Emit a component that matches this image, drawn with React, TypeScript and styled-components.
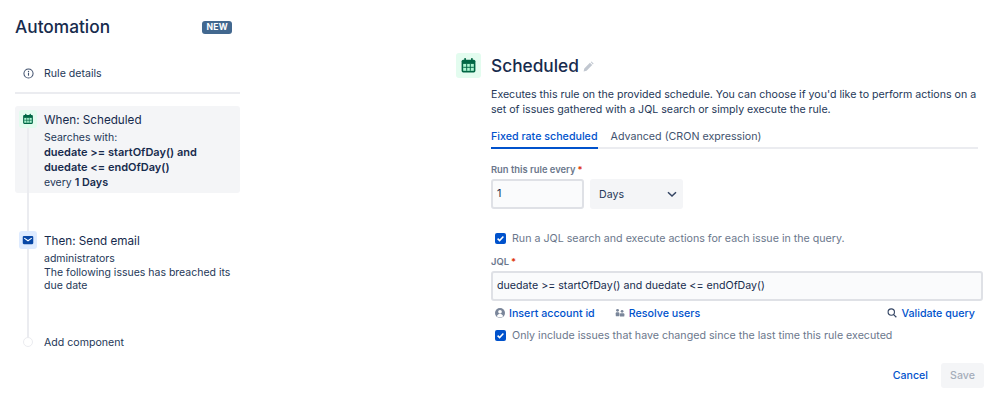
import { FC } from 'react'
import styled, { createGlobalStyle } from 'styled-components'

const GlobalStyle = createGlobalStyle`
  html, body {
    margin: 0;
    padding: 0;
    background: #fff;
    font-family: Inter, 'Liberation Sans', sans-serif;
    color: #172b4d;
  }
`

const Page = styled.div`
  display: flex;
  width: 999px;
  height: 405px;
  overflow: hidden;
  box-sizing: border-box;
  padding: 0 15px;
`

const Sidebar = styled.aside`
  width: 225px;
  flex: none;
  padding-top: 15px;
  position: relative;
`

const SideHead = styled.div`
  display: flex;
  align-items: center;
  justify-content: space-between;
  height: 24px;
  padding-right: 8px;
`

const AppTitle = styled.h1`
  margin: 0;
  font-size: 17.3px;
  font-weight: 500;
  line-height: 24px;
`

const NewBadge = styled.span`
  background: #42688f;
  color: #fff;
  border-radius: 3px;
  font-size: 8.6px;
  font-weight: 700;
  line-height: 13px;
  padding: 0 4px;
  letter-spacing: 0.3px;
`

const DetailsRow = styled.div`
  display: flex;
  align-items: center;
  gap: 10px;
  height: 42px;
  margin-top: 13px;
  padding: 2px 0 0 8px;
  border-bottom: 2px solid #ebecf0;
  box-sizing: border-box;
  font-size: 10.6px;
  color: #253858;
`

const Steps = styled.div`
  position: relative;
  margin-top: 12px;
`

const Rail = styled.div`
  position: absolute;
  z-index: 1;
  left: 12px;
  top: 22px;
  width: 2px;
  height: 210px;
  background: #ebecf0;
`

const Step = styled.div<{ $active?: boolean; $height: number; $top?: number }>`
  position: relative;
  display: flex;
  gap: 6px;
  height: ${p => p.$height}px;
  margin-top: ${p => p.$top ?? 0}px;
  box-sizing: border-box;
  padding: 4px 4px 0;
  border-radius: 3px;
  background: ${p => (p.$active ? '#f4f5f7' : 'transparent')};
`

const StepIcon = styled.div<{ $bg: string }>`
  position: relative;
  z-index: 2;
  width: 18px;
  height: 18px;
  flex: none;
  display: flex;
  align-items: center;
  justify-content: center;
  border-radius: 3px;
  background: ${p => p.$bg};
`

const StepBody = styled.div`
  font-size: 10.5px;
  line-height: 13.5px;
  color: #253858;
  padding-left: 1px;
  white-space: nowrap;
`

const StepTitle = styled.div`
  font-size: 11.7px;
  line-height: 19px;
  color: #172b4d;
  margin: 1px 0;
`

const Jql = styled.div`
  font-size: 11px;
  font-weight: 600;
  line-height: 15.5px;
  color: #172b4d;
`

const Strong = styled.b`
  font-size: 10.8px;
  font-weight: 600;
  color: #172b4d;
`

const AddRow = styled.div`
  position: relative;
  z-index: 2;
  display: flex;
  align-items: center;
  gap: 11px;
  padding-left: 8px;
  height: 20px;
  font-size: 10.6px;
  color: #253858;
`

const AddDot = styled.span`
  width: 10px;
  height: 10px;
  box-sizing: border-box;
  flex: none;
  border-radius: 50%;
  border: 1.5px solid #ebecf0;
  background: #fff;
`

const Main = styled.main`
  margin-left: 216px;
  width: 528px;
  flex: none;
  padding-top: 53px;
`

const MainHead = styled.div`
  display: flex;
  align-items: center;
  height: 25px;
  gap: 10px;
`

const HeadIcon = styled.div`
  width: 25px;
  height: 25px;
  flex: none;
  display: flex;
  align-items: center;
  justify-content: center;
  border-radius: 3px;
  background: #e3fcef;
`

const MainTitle = styled.h2`
  margin: 0;
  font-size: 17.3px;
  font-weight: 500;
  line-height: 25px;
`

const Content = styled.div`
  padding-left: 35px;
`

const Description = styled.p`
  margin: 9px 0 0;
  font-size: 10.62px;
  line-height: 15px;
  color: #253858;
  white-space: nowrap;
`

const Tabs = styled.div`
  display: flex;
  gap: 13px;
  margin-top: 7px;
  width: 487px;
  height: 23px;
  border-bottom: 2px solid #ebecf0;
`

const Tab = styled.div<{ $active?: boolean }>`
  font-size: 10.7px;
  line-height: 26px;
  height: 23px;
  font-weight: ${p => (p.$active ? 500 : 400)};
  color: ${p => (p.$active ? '#0052cc' : '#42526e')};
  border-bottom: 2px solid ${p => (p.$active ? '#0052cc' : 'transparent')};
`

const FieldLabel = styled.div<{ $top: number }>`
  display: flex;
  gap: 2px;
  margin-top: ${p => p.$top}px;
  font-size: 9.4px;
  font-weight: 600;
  line-height: 13px;
  color: #6b778c;
`

const Required = styled.span`
  color: #de350b;
`

const RateRow = styled.div`
  display: flex;
  gap: 6px;
  margin-top: 3px;
`

const NumberBox = styled.div`
  width: 93px;
  height: 30px;
  box-sizing: border-box;
  border: 2px solid #dfe1e6;
  border-radius: 3px;
  background: #fafbfc;
  font-size: 10.8px;
  line-height: 26px;
  padding-left: 4px;
`

const SelectBox = styled.div`
  width: 93px;
  height: 30px;
  box-sizing: border-box;
  border-radius: 3px;
  background: #f4f5f7;
  font-size: 10.6px;
  color: #253858;
  display: flex;
  align-items: center;
  justify-content: space-between;
  padding: 0 4px 0 9px;
`

const CheckRow = styled.div<{ $top: number }>`
  display: flex;
  align-items: center;
  gap: 6px;
  margin-top: ${p => p.$top}px;
  height: 14px;
  padding-left: 4px;
  font-size: 10.67px;
  color: #6b778c;
`

const CheckBox = styled.span`
  width: 11px;
  height: 11px;
  flex: none;
  display: flex;
  align-items: center;
  justify-content: center;
  border-radius: 2px;
  background: #0052cc;
`

const QueryBox = styled.div`
  width: 492px;
  height: 30px;
  margin-top: 3px;
  box-sizing: border-box;
  border: 2px solid #dfe1e6;
  border-radius: 3px;
  background: #fafbfc;
  font-size: 10.67px;
  line-height: 26px;
  padding-left: 4px;
  color: #172b4d;
`

const LinkRow = styled.div`
  display: flex;
  align-items: center;
  width: 484px;
  height: 14px;
  margin-top: 5px;
  padding-left: 4px;
  box-sizing: border-box;
`

const LinkItem = styled.span<{ $push?: boolean }>`
  display: flex;
  align-items: center;
  gap: 4px;
  margin-left: ${p => (p.$push ? 'auto' : '0')};
  margin-right: ${p => (p.$push ? '0' : '20px')};
  font-size: 10.7px;
  font-weight: 500;
  color: #0052cc;
`

const Actions = styled.div`
  display: flex;
  justify-content: flex-end;
  align-items: center;
  gap: 13px;
  width: 493px;
  margin-top: 21px;
`

const TextButton = styled.span`
  font-size: 10.6px;
  font-weight: 500;
  color: #0052cc;
`

const SaveButton = styled.span`
  width: 43px;
  height: 25px;
  border-radius: 3px;
  background: #f4f5f7;
  color: #a5adba;
  font-size: 10.6px;
  font-weight: 500;
  display: flex;
  align-items: center;
  justify-content: center;
`

const CalendarIcon: FC<{ size: number }> = ({ size }) => (
  <svg width={size} height={size} viewBox="0 0 16 16">
    <rect x="1.5" y="2.5" width="13" height="12" rx="1.5" fill="#006644" />
    <rect x="4" y="1" width="1.6" height="3" rx="0.6" fill="#006644" />
    <rect x="10.4" y="1" width="1.6" height="3" rx="0.6" fill="#006644" />
    <rect x="3" y="6.5" width="10" height="6.5" fill="#abf5d1" />
    <path d="M6.3 6.5v6.5M9.7 6.5v6.5M3 9.7h10" stroke="#006644" strokeWidth="0.9" />
  </svg>
)

const MailIcon: FC = () => (
  <svg width="12" height="12" viewBox="0 0 16 16">
    <rect x="1" y="2.5" width="14" height="11" rx="1.5" fill="#0747a6" />
    <path d="M3 5.5l5 3.6 5-3.6" fill="none" stroke="#fff" strokeWidth="1.5" />
  </svg>
)

const InfoIcon: FC = () => (
  <svg width="11" height="11" viewBox="0 0 12 12">
    <circle cx="6" cy="6" r="5" fill="none" stroke="#42526e" strokeWidth="1.1" />
    <rect x="5.4" y="5.2" width="1.2" height="3.2" fill="#42526e" />
    <circle cx="6" cy="3.8" r="0.75" fill="#42526e" />
  </svg>
)

const PencilIcon = styled.svg`
  margin: 2px 0 0 -6px;
`

const Pencil: FC = () => (
  <PencilIcon width="11" height="11" viewBox="0 0 11 11">
    <path d="M0.6 10.4l0.7-3 5.6-5.6 2.3 2.3-5.6 5.6zM7.7 1l0.7-0.6 2.2 2.2-0.7 0.8z" fill="#c1c7d0" />
  </PencilIcon>
)

const Check: FC = () => (
  <svg width="9" height="9" viewBox="0 0 9 9">
    <path d="M1.6 4.6l2 2 3.8-4" fill="none" stroke="#fff" strokeWidth="1.5" />
  </svg>
)

const Chevron: FC = () => (
  <svg width="14" height="14" viewBox="0 0 14 14">
    <path d="M3 5.200L7 9l4-3.800" fill="none" stroke="#344563" strokeWidth="1.500" />
  </svg>
)

const UserIcon: FC = () => (
  <svg width="10" height="10" viewBox="0 0 11 11">
    <circle cx="5.500" cy="5.500" r="5.500" fill="#7a869a" />
    <circle cx="5.500" cy="4.200" r="2" fill="#fff" />
    <path d="M2 9c0.600-1.800 2-2.400 3.500-2.400S8.400 7.200 9 9a5 5 0 0 1-7 0z" fill="#fff" />
  </svg>
)

const PeopleIcon: FC = () => (
  <svg width="10" height="10" viewBox="0 0 11 11">
    <circle cx="2.800" cy="2.600" r="1.600" fill="#7a869a" />
    <circle cx="7.800" cy="3.600" r="1.500" fill="#7a869a" />
    <rect x="0.800" y="4.800" width="4" height="4.400" rx="1" fill="#7a869a" />
    <rect x="5.300" y="5.800" width="5" height="3.600" rx="1" fill="#7a869a" />
  </svg>
)

const SearchIcon: FC = () => (
  <svg width="10" height="10" viewBox="0 0 11 11">
    <circle cx="4.700" cy="4.500" r="3.500" fill="none" stroke="#344563" strokeWidth="1.200" />
    <path d="M7.300 7.200l3 3" stroke="#344563" strokeWidth="1.300" />
  </svg>
)

export default function App() {
  return (
    <Page>
      <GlobalStyle />
      <Sidebar>
        <SideHead>
          <AppTitle>Automation</AppTitle>
          <NewBadge>NEW</NewBadge>
        </SideHead>
        <DetailsRow>
          <InfoIcon />
          Rule details
        </DetailsRow>
        <Steps>
          <Rail />
          <Step $active $height={87}>
            <StepIcon $bg="#e3fcef">
              <CalendarIcon size={12} />
            </StepIcon>
            <StepBody>
              <StepTitle>When: Scheduled</StepTitle>
              Searches with:
              <Jql>
                duedate &gt;= startOfDay() and
                <br />
                duedate &lt;= endOfDay()
              </Jql>
              every <Strong>1 Days</Strong>
            </StepBody>
          </Step>
          <Step $height={105} $top={34}>
            <StepIcon $bg="#deebff">
              <MailIcon />
            </StepIcon>
            <StepBody>
              <StepTitle>Then: Send email</StepTitle>
              administrators
              <br />
              The following issues has breached its
              <br />
              due date
            </StepBody>
          </Step>
          <AddRow>
            <AddDot />
            Add component
          </AddRow>
        </Steps>
      </Sidebar>
      <Main>
        <MainHead>
          <HeadIcon>
            <CalendarIcon size={17} />
          </HeadIcon>
          <MainTitle>Scheduled</MainTitle>
          <Pencil />
        </MainHead>
        <Content>
          <Description>
            Executes this rule on the provided schedule. You can choose if you'd like to perform actions on a
            <br />
            set of issues gathered with a JQL search or simply execute the rule.
          </Description>
          <Tabs>
            <Tab $active>Fixed rate scheduled</Tab>
            <Tab>Advanced (CRON expression)</Tab>
          </Tabs>
          <FieldLabel $top={14}>
            Run this rule every <Required>*</Required>
          </FieldLabel>
          <RateRow>
            <NumberBox>1</NumberBox>
            <SelectBox>
              Days
              <Chevron />
            </SelectBox>
          </RateRow>
          <CheckRow $top={22}>
            <CheckBox>
              <Check />
            </CheckBox>
            Run a JQL search and execute actions for each issue in the query.
          </CheckRow>
          <FieldLabel $top={10}>
            JQL <Required>*</Required>
          </FieldLabel>
          <QueryBox>duedate &gt;= startOfDay() and duedate &lt;= endOfDay()</QueryBox>
          <LinkRow>
            <LinkItem>
              <UserIcon />
              Insert account id
            </LinkItem>
            <LinkItem>
              <PeopleIcon />
              Resolve users
            </LinkItem>
            <LinkItem $push>
              <SearchIcon />
              Validate query
            </LinkItem>
          </LinkRow>
          <CheckRow $top={8}>
            <CheckBox>
              <Check />
            </CheckBox>
            Only include issues that have changed since the last time this rule executed
          </CheckRow>
          <Actions>
            <TextButton>Cancel</TextButton>
            <SaveButton>Save</SaveButton>
          </Actions>
        </Content>
      </Main>
    </Page>
  )
}
